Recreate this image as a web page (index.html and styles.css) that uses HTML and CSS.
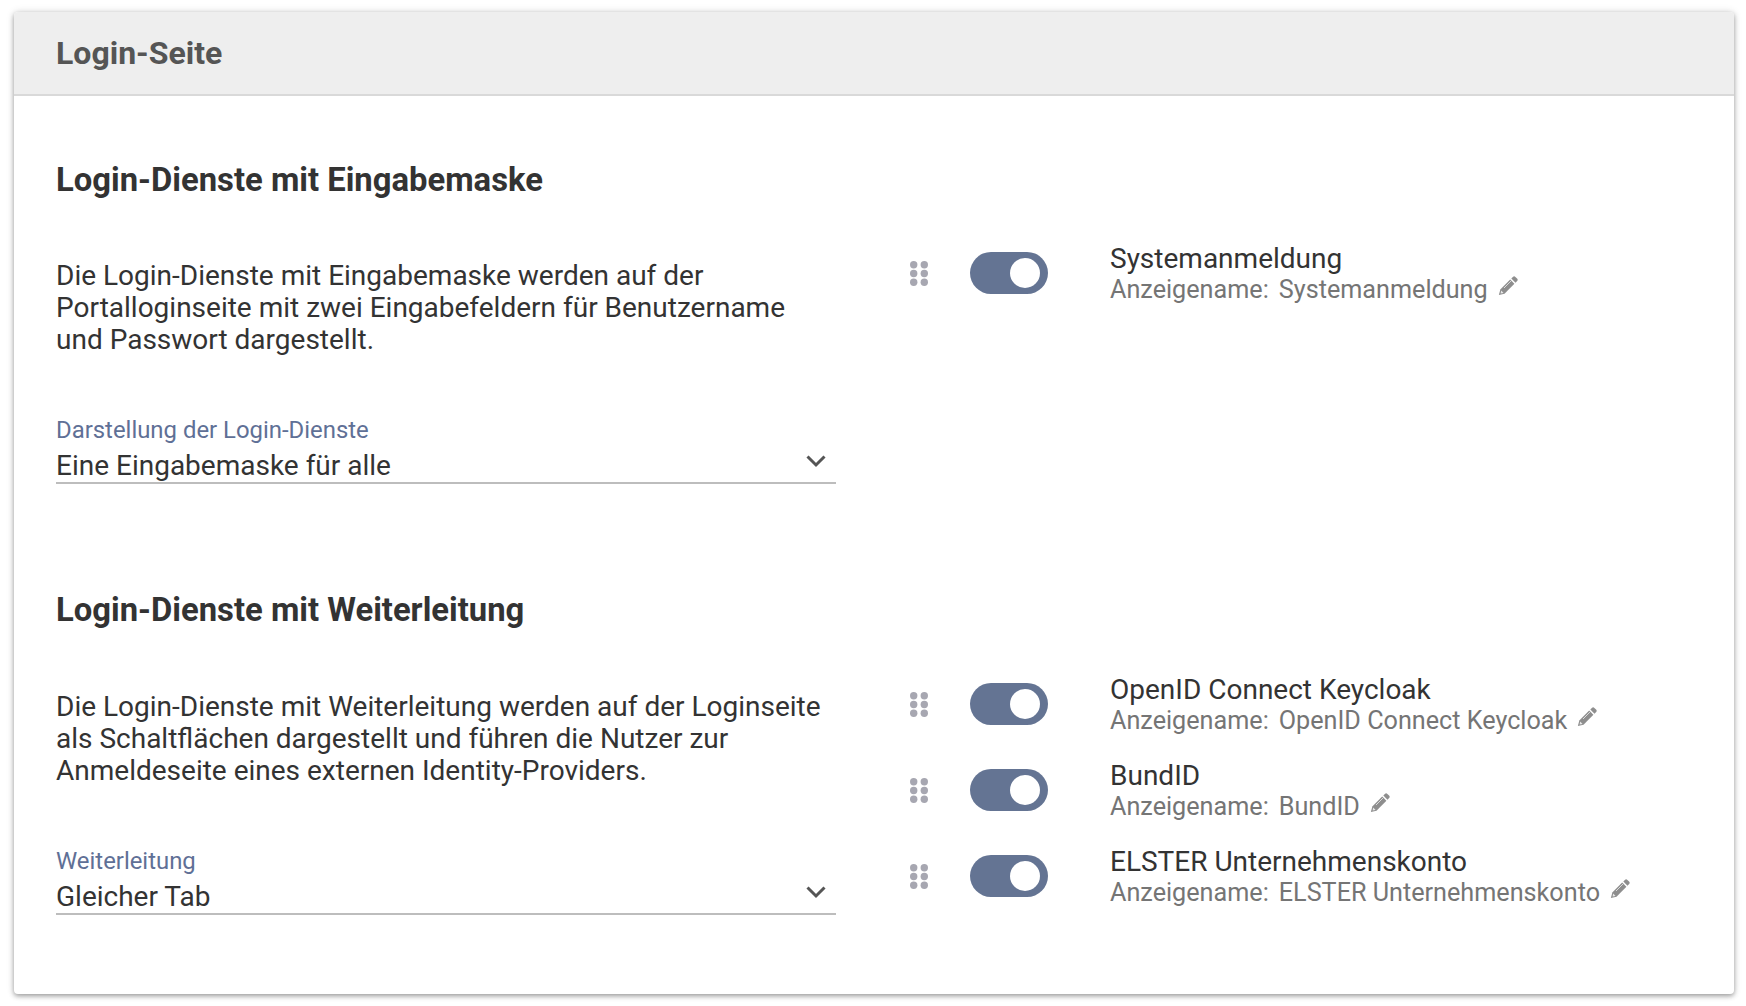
FILE: index.html
```html
<!DOCTYPE html>
<html lang="de">
<head>
<meta charset="utf-8">
<title>Login-Seite</title>
<link rel="stylesheet" href="styles.css">
</head>
<body>
<svg class="defs" width="0" height="0" aria-hidden="true">
  <symbol id="grip" viewBox="0 0 18 25"><g fill="currentColor"><circle cx="3.7" cy="3.7" r="3.7"/><circle cx="14.3" cy="3.7" r="3.7"/><circle cx="3.7" cy="12.5" r="3.7"/><circle cx="14.3" cy="12.5" r="3.7"/><circle cx="3.7" cy="21.3" r="3.7"/><circle cx="14.3" cy="21.3" r="3.7"/></g></symbol>
  <symbol id="pencil" viewBox="0 0 20 20"><path fill="currentColor" d="M14.9.9a1.8 1.8 0 0 1 2.5 0l1.7 1.7a1.8 1.8 0 0 1 0 2.5l-1.6 1.6-4.2-4.2z"/><path fill="currentColor" d="M12.2 3.6l4.2 4.2-9.9 9.9-5.6 1.4 1.4-5.6z"/><path fill="#fff" opacity=".8" d="M3.2 14.5l2.4 2.4-3 .7z"/><path fill="none" stroke="#fff" stroke-width=".9" opacity=".75" d="M6 12l7-7"/></symbol>
  <symbol id="chev" viewBox="0 0 20 14"><path fill="none" stroke="currentColor" stroke-width="3" d="M1.5 2.5 10 11l8.5-8.5"/></symbol>
</svg>
<main class="card">
  <header class="card-head"><h1>Login-Seite</h1></header>
  <div class="card-body">
    <section class="block block-first">
      <h2>Login-Dienste mit Eingabemaske</h2>
      <div class="cols">
        <div class="left">
          <p>Die Login-Dienste mit Eingabemaske werden auf der Portalloginseite mit zwei Eingabefeldern für Benutzername und Passwort dargestellt.</p>
          <div class="field">
            <div class="field-label">Darstellung der Login-Dienste</div>
            <div class="field-row"><span>Eine Eingabemaske für alle</span><svg class="chev"><use href="#chev"/></svg></div>
          </div>
        </div>
        <ul class="services">
          <li class="service">
            <svg class="grip"><use href="#grip"/></svg>
            <span class="toggle"><span class="knob"></span></span>
            <div class="info"><div class="name">Systemanmeldung</div><div class="display"><span class="lbl">Anzeigename:</span><span>Systemanmeldung</span><svg class="pencil"><use href="#pencil"/></svg></div></div>
          </li>
        </ul>
      </div>
    </section>
    <section class="block block-second">
      <h2>Login-Dienste mit Weiterleitung</h2>
      <div class="cols">
        <div class="left">
          <p>Die Login-Dienste mit Weiterleitung werden auf der Loginseite als Schaltflächen dargestellt und führen die Nutzer zur Anmeldeseite eines externen Identity-Providers.</p>
          <div class="field">
            <div class="field-label">Weiterleitung</div>
            <div class="field-row"><span>Gleicher Tab</span><svg class="chev"><use href="#chev"/></svg></div>
          </div>
        </div>
        <ul class="services">
          <li class="service">
            <svg class="grip"><use href="#grip"/></svg>
            <span class="toggle"><span class="knob"></span></span>
            <div class="info"><div class="name">OpenID Connect Keycloak</div><div class="display"><span class="lbl">Anzeigename:</span><span>OpenID Connect Keycloak</span><svg class="pencil"><use href="#pencil"/></svg></div></div>
          </li>
          <li class="service">
            <svg class="grip"><use href="#grip"/></svg>
            <span class="toggle"><span class="knob"></span></span>
            <div class="info"><div class="name">BundID</div><div class="display"><span class="lbl">Anzeigename:</span><span>BundID</span><svg class="pencil"><use href="#pencil"/></svg></div></div>
          </li>
          <li class="service">
            <svg class="grip"><use href="#grip"/></svg>
            <span class="toggle"><span class="knob"></span></span>
            <div class="info"><div class="name">ELSTER Unternehmenskonto</div><div class="display"><span class="lbl">Anzeigename:</span><span>ELSTER Unternehmenskonto</span><svg class="pencil"><use href="#pencil"/></svg></div></div>
          </li>
        </ul>
      </div>
    </section>
  </div>
</main>
</body>
</html>
```

FILE: styles.css
```css
* { box-sizing: border-box; }
html, body { margin: 0; padding: 0; background: #fff; }
body { padding: 12px 12px 0 14px; font-family: Roboto, "Noto Sans", sans-serif; color: #333; height: 1006px; overflow: hidden; }
.defs { position: absolute; }
.card { width: 1720px; height: 982px; background: #fff; border-radius: 4px; box-shadow: 0 2px 5px rgba(0,0,0,.35), 0 0 8px rgba(0,0,0,.12); overflow: hidden; }
.card-head { height: 84px; background: #eee; border-bottom: 2px solid #d9d9d9; padding: 0 42px; display: flex; align-items: center; }
h1 { margin: 0; font-size: 32px; font-weight: 700; color: #555; }
.card-body { padding: 0 42px; }
.block-first { padding-top: 64px; }
.block { padding-bottom: 106.4px; }
h2 { margin: 0; font-size: 32.8px; line-height: 40px; font-weight: 700; color: #333; }
.cols { display: flex; margin-top: 60px; }
.block-second .cols { margin-top: 61px; }
.left { width: 780px; flex: none; }
p { margin: 0; font-size: 28px; line-height: 32.2px; }
.field { margin-top: 58px; }
.field-label { font-size: 23.9px; line-height: 30px; color: #5f7096; }
.field-row { display: flex; justify-content: space-between; align-items: center; height: 39px; padding: 4px 10px 0 0; border-bottom: 2px solid #bdbdbd; font-size: 28px; }
.chev { width: 20px; height: 14px; color: #555; margin-top: -8px; }
.services { list-style: none; margin: -30px 0 0; padding: 0 0 0 74px; }
.service { display: flex; align-items: center; height: 86px; }
.grip { width: 18px; height: 25px; color: #a7a7b1; margin-right: 42px; flex: none; }
.toggle { width: 78px; height: 42px; border-radius: 21px; background: #647493; display: block; flex: none; padding: 6px 8px 6px 40px; margin-right: 62px; }
.knob { display: block; width: 30px; height: 30px; border-radius: 50%; background: #fff; }
.info { padding-top: 2px; }
.name { font-size: 28px; line-height: 32px; color: #333; }
.display { font-size: 25.2px; line-height: 30px; color: #757575; display: flex; align-items: center; }
.lbl { margin-right: 10px; }
.pencil { width: 20px; height: 20px; color: #8e8e8e; margin: -8px 0 0 10px; }
```
